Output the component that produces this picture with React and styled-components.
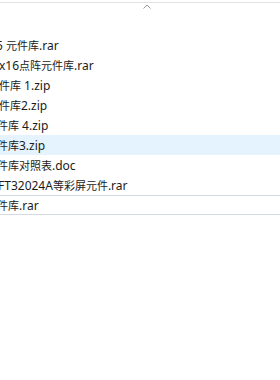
import { createGlobalStyle, styled } from 'styled-components'

const GlobalStyle = createGlobalStyle`
  html, body {
    margin: 0;
    padding: 0;
    background: #ffffff;
    overflow: hidden;
  }
  body {
    font-family: "Segoe UI", "Noto Sans", "Noto Sans CJK SC", sans-serif;
  }
`

const Pane = styled.div`
  width: 280px;
  height: 380px;
  background: #ffffff;
  overflow: hidden;
`

const HeaderBar = styled.div`
  height: 2px;
  border-bottom: 1px solid #e3e3e3;
`

const SortRow = styled.div`
  display: flex;
  justify-content: flex-start;
  padding-left: 143px;
  height: 32px;
  box-sizing: border-box;
  padding-top: 1px;
`

const FileList = styled.ul`
  list-style: none;
  margin: 0;
  padding: 0;
`

const Row = styled.li`
  height: 20px;
  box-sizing: border-box;
  display: flex;
  align-items: center;
  overflow: hidden;
  white-space: nowrap;
  background: ${({ $selected }) => ($selected ? '#e5f3ff' : 'transparent')};
  border-top: 1px solid ${({ $focused }) => ($focused ? '#d3dbe6' : 'transparent')};
  border-bottom: 1px solid ${({ $focused }) => ($focused ? '#d3dbe6' : 'transparent')};
`

const Name = styled.span`
  font-size: 12px;
  line-height: 20px;
  color: #1b1b1b;
  margin-left: ${({ $shift }) => $shift}px;
`

// CJK glyphs in the original font run a little narrower than Noto's
const Cjk = styled.span`
  font-family: "Noto Sans CJK SC", sans-serif;
  font-size: 11px;
`

const files = [
  { name: '5 元件库.rar', shift: -4 },
  { name: 'x16点阵元件库.rar', shift: -1 },
  { name: '件库 1.zip', shift: -1 },
  { name: '件库2.zip', shift: -1 },
  { name: '件库 4.zip', shift: -3 },
  { name: '件库3.zip', shift: -3, selected: true },
  { name: '件库对照表.doc', shift: -3 },
  { name: 'FT32024A等彩屏元件.rar', shift: -2 },
  { name: '件库.rar', shift: -3, focused: true },
]

function FileName({ text }) {
  return text
    .split(/([\u4e00-\u9fff]+)/)
    .filter(Boolean)
    .map((part, i) => (/[\u4e00-\u9fff]/.test(part) ? <Cjk key={i}>{part}</Cjk> : part))
}

function SortCaret() {
  return (
    <svg width="8" height="5" viewBox="0 0 8 5">
      <polyline points="0.5,4.5 4,1 7.5,4.5" fill="none" stroke="#9a9a9a" strokeWidth="1" />
    </svg>
  )
}

export default function App() {
  return (
    <Pane>
      <GlobalStyle />
      <HeaderBar />
      <SortRow>
        <SortCaret />
      </SortRow>
      <FileList>
        {files.map((f) => (
          <Row key={f.name} $selected={f.selected} $focused={f.focused}>
            <Name $shift={f.shift}>
              <FileName text={f.name} />
            </Name>
          </Row>
        ))}
      </FileList>
    </Pane>
  )
}
